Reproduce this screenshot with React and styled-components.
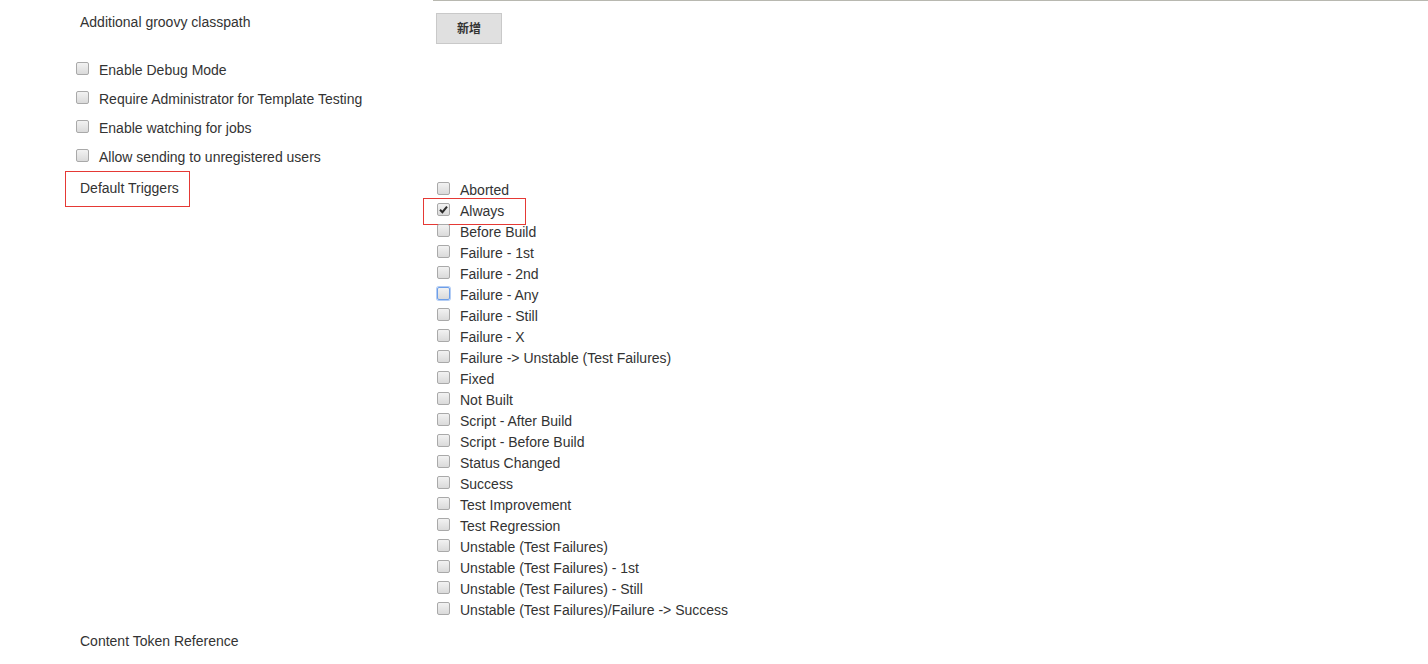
import React from "react";
import styled, { createGlobalStyle } from "styled-components";

const GlobalStyle = createGlobalStyle`
  html, body {
    margin: 0;
    padding: 0;
    background: #fff;
  }
  body {
    font-family: "Liberation Sans", Arial, "Noto Sans CJK SC", sans-serif;
    font-size: 14px;
    color: #333;
  }
`;

const triggers = [
  "Aborted",
  "Always",
  "Before Build",
  "Failure - 1st",
  "Failure - 2nd",
  "Failure - Any",
  "Failure - Still",
  "Failure - X",
  "Failure -> Unstable (Test Failures)",
  "Fixed",
  "Not Built",
  "Script - After Build",
  "Script - Before Build",
  "Status Changed",
  "Success",
  "Test Improvement",
  "Test Regression",
  "Unstable (Test Failures)",
  "Unstable (Test Failures) - 1st",
  "Unstable (Test Failures) - Still",
  "Unstable (Test Failures)/Failure -> Success",
];

const options = [
  "Enable Debug Mode",
  "Require Administrator for Template Testing",
  "Enable watching for jobs",
  "Allow sending to unregistered users",
];

const App = () => {
  return (
    <>
      <GlobalStyle />
      <Form>
        <LabelCell $top={14}>Additional groovy classpath</LabelCell>
        <ControlCell $divider>
          <AddButton type="button">新增</AddButton>
        </ControlCell>

        {options.map((o) => (
          <OptionRow key={o}>
            <CheckBox />
            <span>{o}</span>
          </OptionRow>
        ))}

        <LabelCell $top={0}>
          <Highlight>Default Triggers</Highlight>
        </LabelCell>
        <ControlCell>
          <TriggerList>
            {triggers.map((t) => (
              <TriggerRow key={t}>
                <CheckBox
                  checked={t === "Always"}
                  focused={t === "Failure - Any"}
                />
                <span>{t}</span>
                {t === "Always" && <Annotation />}
              </TriggerRow>
            ))}
          </TriggerList>
        </ControlCell>

        <LabelCell $top={13}>Content Token Reference</LabelCell>
        <ControlCell />
      </Form>
    </>
  );
};

const CheckBox = ({ checked, focused }) => (
  <Box $focused={focused}>
    {checked && (
      <svg width="9" height="9" viewBox="0 0 9 9">
        <path
          d="M1 4.8 L3.4 7.2 L8 1.6"
          fill="none"
          stroke="#2b2b2b"
          strokeWidth="2"
        />
      </svg>
    )}
  </Box>
);

export default App;

const Form = styled.div`
  display: grid;
  grid-template-columns: 433px 1fr;
`;

const LabelCell = styled.div`
  padding-left: 80px;
  padding-top: ${(p) => p.$top}px;
  line-height: 16px;
`;

const ControlCell = styled.div`
  border-top: ${(p) => (p.$divider ? "1px solid #b8b8b0" : "none")};
  padding: ${(p) => (p.$divider ? "12px 3px" : "0 3px")};
  height: ${(p) => (p.$divider ? "55px" : "auto")};
  box-sizing: border-box;
`;

const AddButton = styled.button`
  width: 66px;
  height: 31px;
  background: #e0e0e0;
  border: 1px solid #c9c9c9;
  border-radius: 0;
  color: #333;
  font-family: "Noto Sans CJK SC", sans-serif;
  font-size: 12px;
  font-weight: bold;
  line-height: 28px;
  padding: 0 0 1px;
`;

const OptionRow = styled.label`
  grid-column: 1 / -1;
  display: flex;
  align-items: center;
  gap: 10px;
  height: 29px;
  padding-left: 76px;
  line-height: 16px;
`;

const Highlight = styled.span`
  display: inline-block;
  margin-left: -15px;
  padding: 8px 10px 10px 14px;
  border: 1px solid #e53935;
`;

const TriggerList = styled.div`
  display: flex;
  flex-direction: column;
  padding-top: 8px;
`;

const TriggerRow = styled.label`
  position: relative;
  display: flex;
  align-items: center;
  gap: 10px;
  height: 21px;
  padding-left: 1px;
  line-height: 16px;
`;

const Annotation = styled.span`
  position: absolute;
  left: -13px;
  top: -2px;
  width: 101px;
  height: 25px;
  border: 1px solid #e53935;
  pointer-events: none;
`;

const Box = styled.span`
  flex: none;
  display: inline-flex;
  align-items: center;
  justify-content: center;
  width: 11px;
  height: 11px;
  margin-top: -2px;
  border: 1px solid ${(p) => (p.$focused ? "#6d9ee8" : "#a9a9a9")};
  border-radius: 2px;
  background: linear-gradient(#f2f2f2, #dadada);
  box-shadow: ${(p) => (p.$focused ? "0 0 0 1px #b3cdf5" : "none")};
`;
